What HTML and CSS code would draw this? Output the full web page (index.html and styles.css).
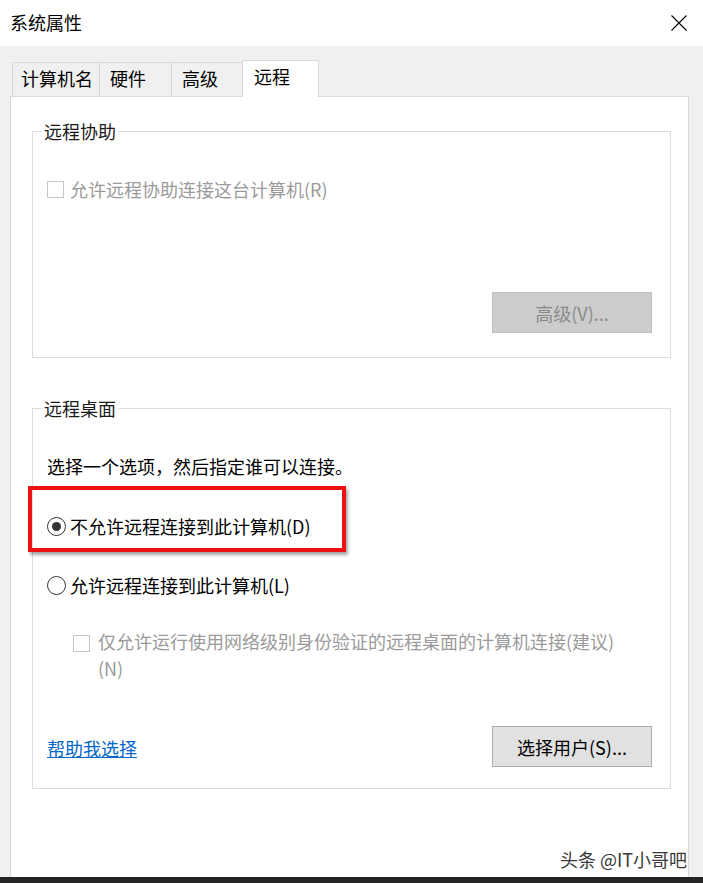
FILE: index.html
```html
<!DOCTYPE html>
<html lang="zh-CN">
  <head>
    <meta charset="UTF-8" />
    <meta name="viewport" content="width=device-width, initial-scale=1.0" />
    <title>系统属性</title>
    <link rel="stylesheet" href="styles.css">
  </head>
  <body>
    <div class="window">
      <div class="titlebar">
        <span class="title">系统属性</span>
        <svg class="close" width="16" height="16" viewBox="0 0 16 16">
          <path d="M0.5 0.5 L15.5 15.5 M15.5 0.5 L0.5 15.5" stroke="#000" stroke-width="1.1" fill="none" />
        </svg>
      </div>

      <div class="tabs">
        <div class="tab tab-name">计算机名</div>
        <div class="tab tab-hw">硬件</div>
        <div class="tab tab-adv">高级</div>
        <div class="tab active">远程</div>
      </div>

      <div class="panel">
        <!-- 远程协助 -->
        <div class="group assist">
          <div class="group-title">远程协助</div>
          <label class="check disabled"><span class="box"></span>允许远程协助连接这台计算机(R)</label>
          <div class="btn-row">
            <button class="btn" disabled>高级(V)...</button>
          </div>
        </div>

        <!-- 远程桌面 -->
        <div class="group desktop">
          <div class="group-title">远程桌面</div>
          <p class="desc">选择一个选项，然后指定谁可以连接。</p>
          <div class="mark">
            <label class="radio"><span class="dot on"></span>不允许远程连接到此计算机(D)</label>
          </div>
          <label class="radio second"><span class="dot"></span>允许远程连接到此计算机(L)</label>
          <label class="check disabled sub">
            <span class="box"></span>
            <span class="sub-text">仅允许运行使用网络级别身份验证的远程桌面的计算机连接(建议)(N)</span>
          </label>
          <div class="footer-row">
            <a href="#" class="help">帮助我选择</a>
            <button class="btn">选择用户(S)...</button>
          </div>
        </div>
      </div>

      <div class="taskbar"></div>
      <div class="watermark">头条 @IT小哥吧</div>
    </div>
  </body>
</html>
```

FILE: styles.css
```css
body {
  margin: 0;
  font-family: "Noto Sans CJK SC", "Noto Sans", sans-serif;
  font-size: 18px;
  color: #000;
  background: #f0f0f0;
}

.window {
  position: relative;
  width: 703px;
  height: 883px;
  overflow: hidden;
  background: #f0f0f0;
}

.titlebar {
  height: 46px;
  background: #fff;
  display: flex;
  align-items: center;
  justify-content: space-between;
  padding: 0 16px 0 10px;
}

.title {
  line-height: 24px;
  margin-top: -2px;
}

.close {
  display: block;
  margin-top: -1px;
}

/* tabs */
.tabs {
  display: flex;
  align-items: flex-end;
  padding: 14px 0 0 12px;
}

.tab {
  box-sizing: border-box;
  height: 34px;
  line-height: 30px;
  border: 1px solid #d9d9d9;
  border-bottom: none;
  margin-left: -1px;
  background: #f0f0f0;
  white-space: nowrap;
}

.tab-name {
  margin-left: 0;
  width: 88px;
  padding-left: 8px;
}

.tab-hw {
  width: 73px;
  padding-left: 10px;
}

.tab-adv {
  width: 72px;
  padding-left: 10px;
}

.tab.active {
  position: relative;
  z-index: 1;
  width: 77px;
  height: 37px;
  padding-left: 11px;
  margin-bottom: -1px;
  background: #fff;
}

/* panel */
.panel {
  box-sizing: border-box;
  height: 781px;
  margin: 0 14px 0 10px;
  padding: 34px 17px 0 21px;
  background: #fff;
  border: 1px solid #d9d9d9;
  border-bottom: none;
}

.group {
  border: 1px solid #dcdcdc;
  padding: 0 18px 0 14px;
}

.group-title {
  width: fit-content;
  margin: -13px 0 0 -5px;
  padding: 0 2px;
  line-height: 24px;
  background: #fff;
  color: #1a1a1a;
}

.assist {
  padding-bottom: 24px;
}

.desktop {
  margin-top: 50px;
  padding-bottom: 21px;
}

/* checkboxes and radios */
.check,
.radio {
  display: flex;
  align-items: center;
  line-height: 27px;
}

.check .box {
  box-sizing: border-box;
  width: 17px;
  height: 17px;
  border: 1px solid #333;
  background: #fff;
  margin-right: 6px;
  flex-shrink: 0;
}

.check.disabled {
  color: #9a9a9a;
}

.check.disabled .box {
  border-color: #c6c6c6;
}

.assist .check {
  margin-top: 33px;
}

.radio .dot {
  box-sizing: border-box;
  width: 19px;
  height: 19px;
  border: 1px solid #333;
  border-radius: 50%;
  margin-right: 4px;
  flex-shrink: 0;
  display: flex;
  align-items: center;
  justify-content: center;
}

.radio .dot.on::after {
  content: "";
  width: 9px;
  height: 9px;
  border-radius: 50%;
  background: #333;
}

.btn-row {
  display: flex;
  justify-content: flex-end;
  margin-top: 89px;
}

.btn {
  width: 160px;
  height: 41px;
  font-family: inherit;
  font-size: 18px;
  color: #000;
  background: #e1e1e1;
  border: 1px solid #adadad;
  padding: 0;
}

.btn:disabled {
  background: #cccccc;
  border-color: #bfbfbf;
  color: #8a8a8a;
}

.desc {
  margin: 33px 0 0;
  line-height: 27px;
}

/* red highlight box */
.mark {
  width: 318px;
  box-sizing: border-box;
  margin: 6px 0 0 -19px;
  padding: 23px 0 8px 15px;
  border: 4px solid #ee1111;
  box-shadow: 2px 3px 3px rgba(0, 0, 0, 0.35);
}

.radio.second {
  margin-top: 20px;
}

.check.sub {
  align-items: flex-start;
  margin: 29px 0 0 26px;
}

.check.sub .box {
  margin-top: 7px;
  margin-right: 8px;
}

.sub-text {
  max-width: 530px;
}

.footer-row {
  display: flex;
  align-items: center;
  justify-content: space-between;
  margin-top: 44px;
}

.help {
  color: #0066cc;
  text-decoration: underline;
  line-height: 27px;
  margin-top: 3px;
}

.taskbar {
  height: 6px;
  background: #242424;
}

.watermark {
  position: absolute;
  left: 560px;
  top: 846px;
  line-height: 27px;
  font-size: 18px;
  color: #3a3a3a;
  text-shadow: 1px 0 0 #fff, -1px 0 0 #fff, 0 1px 0 #fff, 0 -1px 0 #fff;
  white-space: nowrap;
}
```
